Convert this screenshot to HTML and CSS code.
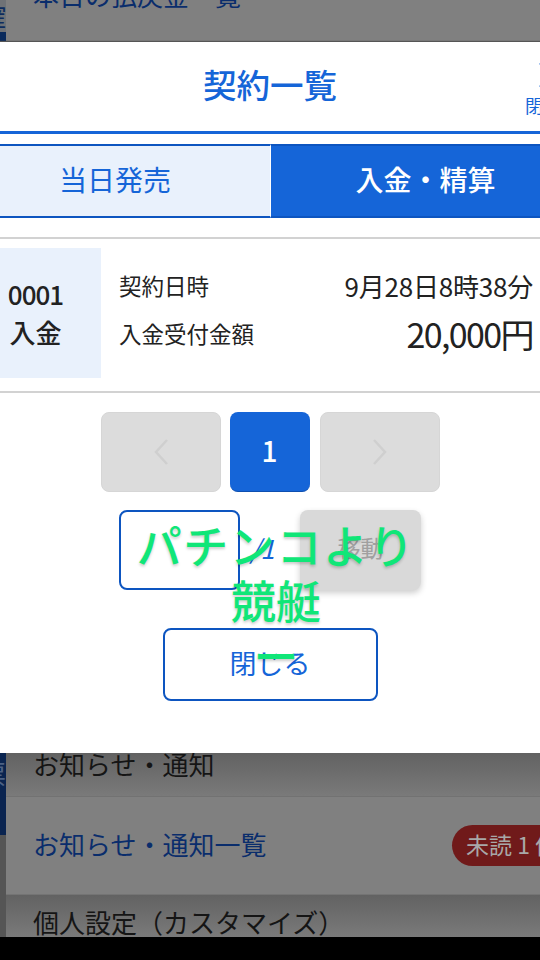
FILE: index.html
```html
<!DOCTYPE html>
<html lang="ja">
<head>
<meta charset="utf-8">
<title>契約一覧</title>
<link rel="stylesheet" href="styles.css">
</head>
<body>
<div class="screen">
  <div class="backdrop">
    <div class="strip">
      <div class="strip-top"><span class="strip-glyph">確</span></div>
      <div class="strip-navy-a"></div>
      <div class="strip-gap"></div>
      <div class="strip-navy-b"><span class="strip-glyph light">票</span></div>
      <div class="strip-rest"></div>
    </div>
    <div class="list">
      <div class="row-first">本日の払戻金一覧</div>
      <div class="list-gap"></div>
      <div class="row-head first">お知らせ・通知</div>
      <div class="row-link">
        <span class="row-link-text">お知らせ・通知一覧</span>
        <span class="pill">未読 1 件</span>
      </div>
      <div class="row-head last">個人設定（カスタマイズ）</div>
    </div>
  </div>

  <div class="modal">
    <header class="modal-head">
      <h1 class="modal-title">契約一覧</h1>
      <button class="modal-x">
        <svg class="x-icon" viewBox="0 0 32 26" width="32" height="26"><path d="M2 1 L30 25 M30 1 L2 25" stroke="#1565d8" stroke-width="2.5" fill="none"/></svg>
        <span>閉じる</span>
      </button>
    </header>
    <nav class="tabs">
      <div class="tab">当日発売</div>
      <div class="tab active">入金・精算</div>
    </nav>
    <section class="contract">
      <div class="contract-id">
        <span class="contract-no">0001</span>
        <span>入金</span>
      </div>
      <dl class="contract-info">
        <div class="info-row"><dt>契約日時</dt><dd class="date">9月28日8時38分</dd></div>
        <div class="info-row"><dt>入金受付金額</dt><dd class="amount">20,000円</dd></div>
      </dl>
    </section>
    <div class="pager">
      <div class="page-btn wide">
        <svg viewBox="0 0 16 28" width="16" height="28"><path d="M14 2 L3 14 L14 26" stroke="#cfcfcf" stroke-width="2.5" fill="none"/></svg>
      </div>
      <div class="page-btn current">1</div>
      <div class="page-btn wide">
        <svg viewBox="0 0 16 28" width="16" height="28"><path d="M2 2 L13 14 L2 26" stroke="#cfcfcf" stroke-width="2.5" fill="none"/></svg>
      </div>
    </div>
    <div class="jump">
      <div class="jump-input"></div>
      <span class="jump-total">/1</span>
      <div class="jump-btn">移動</div>
    </div>
    <div class="close-wrap">
      <div class="close-btn">閉じる</div>
    </div>
  </div>

  <div class="ticker">
    <span class="ticker-wide">パチンコより</span>
    <span>競艇</span>
    <span>ー</span>
  </div>
</div>
<div class="navbar"></div>
</body>
</html>
```

FILE: styles.css
```css
* { box-sizing: border-box; }
html, body { margin: 0; padding: 0; }
body {
  width: 540px;
  height: 960px;
  overflow: hidden;
  background: #000;
  font-family: "Noto Sans CJK JP", "Noto Sans", sans-serif;
}
.screen {
  position: relative;
  width: 540px;
  height: 937px;
  overflow: hidden;
}

/* dimmed page behind the dialog */
.backdrop {
  display: flex;
  height: 100%;
  background: #808080;
}
.strip {
  width: 6px;
  flex: none;
  display: flex;
  flex-direction: column;
  overflow: hidden;
}
.strip-top { height: 32px; flex: none; background: #6f7276; overflow: hidden; }
.strip-navy-a { height: 10px; flex: none; background: #0a2a5c; }
.strip-gap { flex: 1; }
.strip-navy-b { height: 82px; flex: none; background: #0a2450; overflow: hidden; }
.strip-rest { height: 102px; flex: none; background: #555; }
.strip-glyph {
  display: block;
  margin-left: -20px;
  width: 26px;
  font-size: 26px;
  line-height: 32px;
  color: #0d2c5e;
}
.strip-glyph.light { color: #4d6284; margin-top: 4px; }
.list {
  flex: 1;
  display: flex;
  flex-direction: column;
  min-width: 0;
}
.row-first {
  height: 42px;
  flex: none;
  margin-top: -19px;
  padding-left: 27px;
  font-size: 26px;
  line-height: 28px;
  color: #0a2d6c;
  white-space: nowrap;
}
.list-gap { flex: 1; }
.row-head {
  flex: none;
  padding-left: 27px;
  font-size: 26px;
  color: #151515;
  background: linear-gradient(#626262, #7a7a7a);
  white-space: nowrap;
}
.row-head.first {
  height: 44px;
  line-height: 22px;
  border-bottom: 1px solid #727272;
}
.row-head.last {
  height: 43px;
  line-height: 54px;
  overflow: hidden;
  border-top: 1px solid #747474;
}
.row-link {
  height: 97px;
  flex: none;
  display: flex;
  align-items: center;
  justify-content: space-between;
  padding-left: 27px;
  font-size: 26px;
  color: #0a2d6c;
  white-space: nowrap;
  overflow: hidden;
}
.row-link-text { margin-bottom: 4px; }
.pill {
  flex: none;
  width: 110px;
  margin-right: -22px;
  margin-bottom: 1px;
  height: 41px;
  line-height: 38px;
  padding-left: 14px;
  border-radius: 21px 0 0 21px;
  background: #701a1a;
  color: #a8a8a8;
  font-size: 23px;
}

/* dialog: wider than the viewport, lies over the page */
.modal {
  position: absolute;
  left: -40px;
  top: 42px;
  width: 620px;
  height: 711px;
  background: #fff;
  box-shadow: 0 -1px 1px #555;
}
.modal-head {
  position: relative;
  height: 92px;
  border-bottom: 3px solid #1565d8;
  display: flex;
  align-items: center;
  justify-content: center;
}
.modal-title {
  margin: 0 0 6px;
  font-size: 33.5px;
  font-weight: 500;
  color: #1565d8;
  line-height: 80px;
}
.modal-x {
  position: absolute;
  top: 0;
  width: 54px;
  left: 565px;
  padding: 0;
  border: 0;
  background: none;
  font: inherit;
  font-size: 18px;
  line-height: 24px;
  color: #1565d8;
  white-space: nowrap;
  display: flex;
  flex-direction: column;
  align-items: center;
}
.x-icon { margin: 20px 0 5px 3px; }
.tabs {
  display: flex;
  margin-top: 10px;
  height: 74px;
}
.tab {
  width: 50%;
  display: flex;
  align-items: center;
  justify-content: center;
  padding-bottom: 4px;
  background: #e9f1fc;
  color: #1565d8;
  font-size: 28px;
  border-top: 2px solid #0d55c0;
  border-bottom: 2px solid #0d55c0;
}
.tab.active {
  background: #1565d8;
  color: #fff;
  font-weight: 500;
  border-left: 1px solid #fff;
}
.contract {
  margin-top: 19px;
  height: 156px;
  border-top: 2px solid #d2d2d2;
  border-bottom: 2px solid #d2d2d2;
  display: flex;
  align-items: center;
}
.contract-id {
  width: 141px;
  height: 130px;
  flex: none;
  margin-bottom: 5px;
  padding-left: 10px;
  background: #e9f1fc;
  color: #222;
  font-size: 26px;
  line-height: 38px;
  font-weight: 500;
  display: flex;
  flex-direction: column;
  align-items: center;
  justify-content: center;
}
.contract-no { letter-spacing: -1px; }
.contract-info {
  flex: 1;
  margin: 0;
  padding: 0 47px 12px 18px;
}
.info-row {
  display: flex;
  align-items: center;
  justify-content: space-between;
  height: 48px;
  color: #222;
}
dt { font-size: 22.5px; }
dd { margin: 0; }
.date { font-size: 26px; letter-spacing: -0.2px; }
.amount { font-size: 34px; letter-spacing: -1.6px; }
.pager {
  display: flex;
  justify-content: center;
  gap: 9px;
  margin-top: 19px;
}
.page-btn {
  width: 80px;
  height: 80px;
  border-radius: 8px;
  display: flex;
  align-items: center;
  justify-content: center;
}
.page-btn.wide {
  width: 120px;
  background: #dcdcdc;
  border: 1px solid #d6d6d6;
}
.page-btn.current {
  margin-right: 1px;
  background: #1565d8;
  color: #fff;
  font-size: 28px;
  font-weight: 500;
  padding-bottom: 3px;
  border-bottom: 1px solid #0d4fb0;
}
.jump {
  display: flex;
  align-items: center;
  margin-top: 18px;
  padding-left: 159px;
}
.jump-input {
  width: 121px;
  height: 80px;
  border: 2px solid #0d55c0;
  border-radius: 8px;
  background: #fff;
}
.jump-total {
  width: 60px;
  padding: 0 0 6px 10px;
  color: #1565d8;
  font-size: 26px;
  font-style: italic;
}
.jump-btn {
  width: 121px;
  height: 80px;
  padding-bottom: 6px;
  border-radius: 8px;
  background: #d9d9d9;
  color: #a0a0a0;
  font-size: 23px;
  display: flex;
  align-items: center;
  justify-content: center;
  box-shadow: 0 3px 6px rgba(0, 0, 0, .2);
}
.close-wrap {
  display: flex;
  justify-content: center;
  margin-top: 38px;
}
.close-btn {
  width: 215px;
  height: 73px;
  padding-bottom: 5px;
  border: 2px solid #0d55c0;
  border-radius: 8px;
  display: flex;
  align-items: center;
  justify-content: center;
  color: #1565d8;
  font-size: 27px;
}

/* scrolling overlay text */
.ticker {
  position: absolute;
  left: 6px;
  top: 517px;
  width: 540px;
  display: flex;
  flex-direction: column;
  align-items: center;
  color: #10e678;
  font-size: 45px;
  font-weight: 500;
  line-height: 55px;
  text-shadow: 0 2px 3px rgba(0, 0, 0, .2);
}
.ticker-wide { letter-spacing: 1.6px; }
.navbar { height: 23px; background: #000; }
```
